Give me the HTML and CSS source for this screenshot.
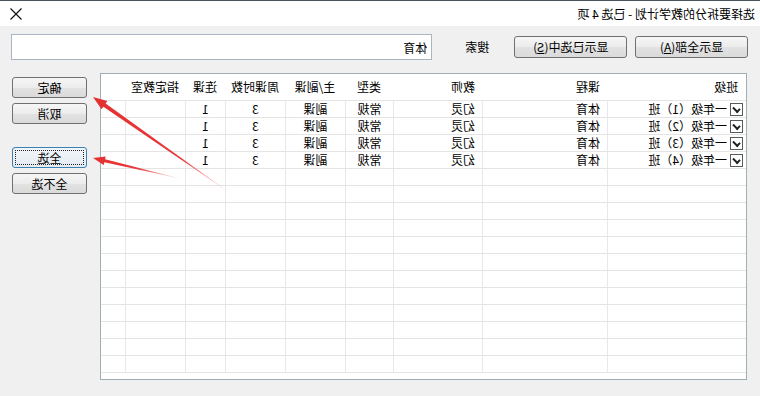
FILE: index.html
```html
<!DOCTYPE html>
<html lang="zh-CN">
<head>
    <meta charset="UTF-8">
    <title>选择要拆分的教学计划</title>
    <link rel="stylesheet" href="styles.css">
</head>
<body>

    <div class="dialog">
        <div class="titlebar">
            <span class="title">选择要拆分的教学计划 - 已选 4 项</span>
            <span class="close">
                <svg width="12" height="12" viewBox="0 0 12 12"><path d="M0.5 0.5 L11.5 11.5 M11.5 0.5 L0.5 11.5" stroke="#111" stroke-width="1.2" fill="none"/></svg>
            </span>
        </div>

        <div class="body">
            <!-- search bar -->
            <div class="toolbar">
                <button class="btn btn-wide">显示全部(<u>A</u>)</button>
                <button class="btn btn-wide">显示已选中(<u>S</u>)</button>
                <span class="search-label">搜索</span>
                <input class="search" type="text" value="体育">
            </div>

            <div class="main">
                <div class="grid">
                    <table>
                        <colgroup>
                            <col style="width:139px"><col style="width:125px"><col style="width:89px"><col style="width:48px">
                            <col style="width:60px"><col style="width:60px"><col style="width:40px"><col style="width:60px"><col>
                        </colgroup>
                        <thead>
                            <tr>
                                <th class="left first">班级</th>
                                <th class="left">课程</th>
                                <th class="left">教师</th>
                                <th>类型</th>
                                <th>主/副课</th>
                                <th>周课时数</th>
                                <th>连课</th>
                                <th>指定教室</th>
                                <th class="filler"></th>
                            </tr>
                        </thead>
                        <tbody>
                            <tr><td class="left first"><span class="check"></span>一年级（1）班</td><td class="left">体育</td><td class="left">幻灵</td><td>常规</td><td>副课</td><td>3</td><td>1</td><td></td><td class="filler"></td></tr>
                            <tr><td class="left first"><span class="check"></span>一年级（2）班</td><td class="left">体育</td><td class="left">幻灵</td><td>常规</td><td>副课</td><td>3</td><td>1</td><td></td><td class="filler"></td></tr>
                            <tr><td class="left first"><span class="check"></span>一年级（3）班</td><td class="left">体育</td><td class="left">幻灵</td><td>常规</td><td>副课</td><td>3</td><td>1</td><td></td><td class="filler"></td></tr>
                            <tr><td class="left first"><span class="check"></span>一年级（4）班</td><td class="left">体育</td><td class="left">幻灵</td><td>常规</td><td>副课</td><td>3</td><td>1</td><td></td><td class="filler"></td></tr>
                            <tr><td></td><td></td><td></td><td></td><td></td><td></td><td></td><td></td><td class="filler"></td></tr>
                            <tr><td></td><td></td><td></td><td></td><td></td><td></td><td></td><td></td><td class="filler"></td></tr>
                            <tr><td></td><td></td><td></td><td></td><td></td><td></td><td></td><td></td><td class="filler"></td></tr>
                            <tr><td></td><td></td><td></td><td></td><td></td><td></td><td></td><td></td><td class="filler"></td></tr>
                            <tr><td></td><td></td><td></td><td></td><td></td><td></td><td></td><td></td><td class="filler"></td></tr>
                            <tr><td></td><td></td><td></td><td></td><td></td><td></td><td></td><td></td><td class="filler"></td></tr>
                            <tr><td></td><td></td><td></td><td></td><td></td><td></td><td></td><td></td><td class="filler"></td></tr>
                            <tr><td></td><td></td><td></td><td></td><td></td><td></td><td></td><td></td><td class="filler"></td></tr>
                            <tr><td></td><td></td><td></td><td></td><td></td><td></td><td></td><td></td><td class="filler"></td></tr>
                            <tr><td></td><td></td><td></td><td></td><td></td><td></td><td></td><td></td><td class="filler"></td></tr>
                            <tr><td></td><td></td><td></td><td></td><td></td><td></td><td></td><td></td><td class="filler"></td></tr>
                            <tr><td></td><td></td><td></td><td></td><td></td><td></td><td></td><td></td><td class="filler"></td></tr>
                        </tbody>
                    </table>
                </div>

                <div class="side">
                    <button class="btn btn-side">确定</button>
                    <button class="btn btn-side">取消</button>
                    <button class="btn btn-side focused">全选</button>
                    <button class="btn btn-side">全不选</button>
                </div>
            </div>
        </div>

        <!-- annotation arrows -->
        <svg class="arrows" width="760" height="396" viewBox="0 0 760 396">
            <defs>
                <linearGradient id="fade1" gradientUnits="userSpaceOnUse" x1="530" y1="192" x2="667" y2="96">
                    <stop offset="0" stop-color="#f4a0a0" stop-opacity="0.4"/>
                    <stop offset="0.35" stop-color="#e8383a"/>
                    <stop offset="1" stop-color="#e53030"/>
                </linearGradient>
                <linearGradient id="fade2" gradientUnits="userSpaceOnUse" x1="578" y1="178" x2="667" y2="157">
                    <stop offset="0" stop-color="#f4a0a0" stop-opacity="0.3"/>
                    <stop offset="0.5" stop-color="#e8383a"/>
                    <stop offset="1" stop-color="#e53030"/>
                </linearGradient>
            </defs>
            <polygon fill="url(#fade1)" points="530,192 656.6,105.7 658.4,108.2 667,96 652.6,100 654.4,102.4"/>
            <polygon fill="url(#fade2)" points="578,178 655.6,161.2 656.3,164.1 667,157 654.3,155.4 654.9,158.3"/>
        </svg>
    </div>

</body>
</html>
```

FILE: styles.css
```css
body {
    margin: 0;
    padding: 0;
    overflow: hidden;
    font-family: "Noto Sans CJK SC", "Liberation Sans", sans-serif;
    font-size: 12px;
    color: #000;
    background: #f0f0f0;
}
.dialog {
    position: relative;
    width: 760px;
    height: 396px;
    display: flex;
    flex-direction: column;
    border-top: 1px solid #4a545c;
    box-sizing: border-box;
    transform: scaleX(-1);
}
.titlebar {
    height: 25px;
    background: #fff;
    display: flex;
    align-items: center;
    justify-content: space-between;
    padding: 0 10px 0 5px;
}
.title {
    line-height: 14px;
}
.close {
    display: flex;
}
.body {
    flex: 1;
    background: #f0f0f0;
    padding: 8px 11px 0 12px;
}
.toolbar {
    display: flex;
    align-items: center;
    height: 26px;
}
.btn {
    font-family: inherit;
    font-size: 12px;
    line-height: 14px;
    color: #000;
    border: 1px solid #707070;
    border-radius: 3px;
    background: linear-gradient(#f6f6f6 0%, #ececec 50%, #e2e2e2 51%, #dadada 100%);
    padding: 0;
    box-sizing: border-box;
}
.btn-wide {
    width: 113px;
    height: 22px;
    margin-right: 8px;
}
.search-label {
    margin-left: 17px;
    white-space: nowrap;
    line-height: 14px;
}
.search {
    margin-left: 33px;
    width: 422px;
    height: 26px;
    box-sizing: border-box;
    border: 1px solid #a9b6c2;
    padding: 0 4px;
    font-family: inherit;
    font-size: 12px;
    background: #fff;
    outline: none;
}
.main {
    display: flex;
    margin-top: 13px;
}
.grid {
    margin-left: 1px;
    width: 647px;
    height: 307px;
    box-sizing: border-box;
    border: 1px solid #9fadb5;
    background: #fff;
    overflow: hidden;
}
table {
    width: 645px;
    table-layout: fixed;
    border-collapse: separate;
    border-spacing: 0;
}
th {
    height: 26px;
    padding: 0;
    font-weight: normal;
    text-align: center;
    border-bottom: 1px solid #e4e4e4;
    line-height: 14px;
}
td {
    height: 16px;
    padding: 0;
    line-height: 14px;
    text-align: center;
    white-space: nowrap;
    border-bottom: 1px solid #e4e4e4;
    border-right: 1px solid #e8e8e8;
}
td.filler {
    border-right: none;
}
th.left, td.left {
    text-align: left;
    padding-left: 7px;
}
th.first {
    padding-left: 8px;
}
td.first {
    padding-left: 3px;
}
.check {
    display: inline-block;
    vertical-align: -2px;
    width: 11px;
    height: 11px;
    margin-right: 3px;
    border: 1px solid #5a5a5a;
    background: #fff;
    position: relative;
}
.check::after {
    content: "";
    position: absolute;
    left: 2px;
    top: 1px;
    width: 5px;
    height: 3px;
    border-left: 2px solid #222;
    border-bottom: 2px solid #222;
    transform: rotate(-45deg) translate(-1px, 1px);
}
.side {
    display: flex;
    flex-direction: column;
    margin-left: 13px;
    padding-top: 4px;
}
.btn-side {
    width: 75px;
    height: 21px;
    margin-bottom: 5px;
}
.btn-side:nth-child(3) {
    margin-top: 18px;
}
.btn.focused {
    border-color: #3c7fb1;
    background: linear-gradient(#f2f5f8 0%, #e4ebf1 100%);
    outline: 1px dotted #222;
    outline-offset: -4px;
}
.arrows {
    position: absolute;
    left: 0;
    top: 0;
    pointer-events: none;
}
```
